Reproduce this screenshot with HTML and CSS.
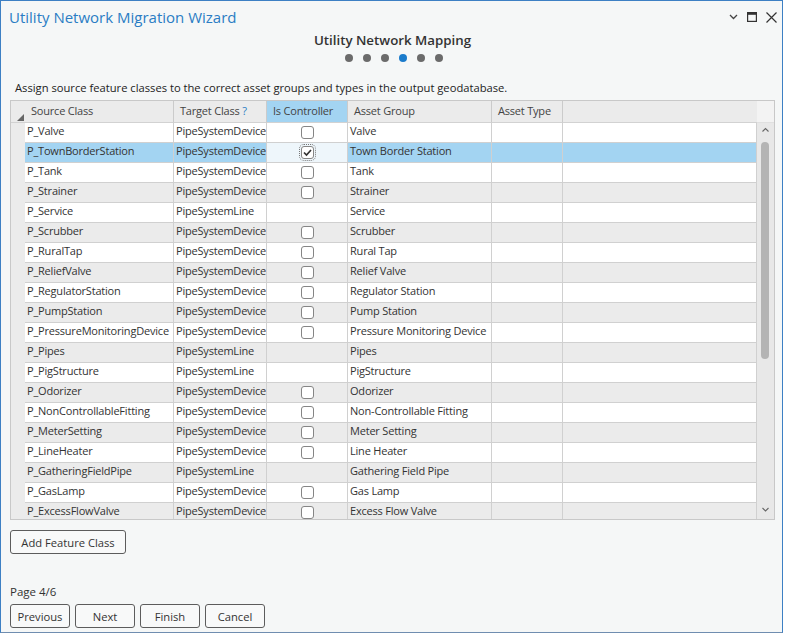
FILE: index.html
```html
<!DOCTYPE html>
<html lang="en">
<head>
    <meta charset="UTF-8">
    <title>Utility Network Migration Wizard</title>
    <link rel="stylesheet" href="styles.css">
</head>
<body>
    <div class="window">
        <div class="titlebar">
            <span class="title">Utility Network Migration Wizard</span>
            <div class="win-controls">
                <svg width="9" height="6" viewBox="0 0 9 6"><polyline points="1,1 4.5,4.5 8,1" fill="none" stroke="#444" stroke-width="1.3"/></svg>
                <svg width="10" height="10" viewBox="0 0 10 10"><rect x="0.6" y="0.6" width="8.8" height="8.8" fill="none" stroke="#333" stroke-width="1.2"/><rect x="0.6" y="0.6" width="8.8" height="2.2" fill="#333"/></svg>
                <svg width="11" height="11" viewBox="0 0 11 11"><path d="M0.5 0.5 L10.5 10.5 M10.5 0.5 L0.5 10.5" stroke="#333" stroke-width="1.2"/></svg>
            </div>
        </div>

        <div class="main">
            <div class="step-head">
                <div class="step-title">Utility Network Mapping</div>
                <div class="dots">
                    <span class="dot"></span>
                    <span class="dot"></span>
                    <span class="dot"></span>
                    <span class="dot active"></span>
                    <span class="dot"></span>
                    <span class="dot"></span>
                </div>
            </div>

            <p class="desc">Assign source feature classes to the correct asset groups and types in the output geodatabase.</p>

            <div class="grid">
                <div class="grid-head">
                    <div class="corner">
                        <svg width="8" height="7" viewBox="0 0 8 7"><polygon points="0,7 7,7 7,0" fill="#666"/></svg>
                    </div>
                    <div class="hcell c-src">Source Class</div>
                    <div class="hcell c-tgt">Target Class <span class="help">?</span></div>
                    <div class="hcell c-ctl sorted">Is Controller</div>
                    <div class="hcell c-grp">Asset Group</div>
                    <div class="hcell c-typ">Asset Type</div>
                    <div class="hcell c-fill"></div>
                    <div class="scroll-corner"></div>
                </div>
                <div class="grid-body">
                    <div class="rows">
                        <div class="row">
                            <div class="rh"></div>
                            <div class="cell c-src">P_Valve</div>
                            <div class="cell c-tgt">PipeSystemDevice</div>
                            <div class="cell c-ctl"><span class="check"></span></div>
                            <div class="cell c-grp">Valve</div>
                            <div class="cell c-typ"></div>
                            <div class="cell c-fill"></div>
                        </div>
                        <div class="row selected">
                            <div class="rh"></div>
                            <div class="cell c-src">P_TownBorderStation</div>
                            <div class="cell c-tgt">PipeSystemDevice</div>
                            <div class="cell c-ctl"><span class="check checked focus"><svg width="11" height="11" viewBox="0 0 11 11"><polyline points="2,5.5 4.5,8 9,3" fill="none" stroke="#333" stroke-width="1.7"/></svg></span></div>
                            <div class="cell c-grp">Town Border Station</div>
                            <div class="cell c-typ"></div>
                            <div class="cell c-fill"></div>
                        </div>
                        <div class="row">
                            <div class="rh"></div>
                            <div class="cell c-src">P_Tank</div>
                            <div class="cell c-tgt">PipeSystemDevice</div>
                            <div class="cell c-ctl"><span class="check"></span></div>
                            <div class="cell c-grp">Tank</div>
                            <div class="cell c-typ"></div>
                            <div class="cell c-fill"></div>
                        </div>
                        <div class="row">
                            <div class="rh"></div>
                            <div class="cell c-src">P_Strainer</div>
                            <div class="cell c-tgt">PipeSystemDevice</div>
                            <div class="cell c-ctl"><span class="check"></span></div>
                            <div class="cell c-grp">Strainer</div>
                            <div class="cell c-typ"></div>
                            <div class="cell c-fill"></div>
                        </div>
                        <div class="row">
                            <div class="rh"></div>
                            <div class="cell c-src">P_Service</div>
                            <div class="cell c-tgt">PipeSystemLine</div>
                            <div class="cell c-ctl"></div>
                            <div class="cell c-grp">Service</div>
                            <div class="cell c-typ"></div>
                            <div class="cell c-fill"></div>
                        </div>
                        <div class="row">
                            <div class="rh"></div>
                            <div class="cell c-src">P_Scrubber</div>
                            <div class="cell c-tgt">PipeSystemDevice</div>
                            <div class="cell c-ctl"><span class="check"></span></div>
                            <div class="cell c-grp">Scrubber</div>
                            <div class="cell c-typ"></div>
                            <div class="cell c-fill"></div>
                        </div>
                        <div class="row">
                            <div class="rh"></div>
                            <div class="cell c-src">P_RuralTap</div>
                            <div class="cell c-tgt">PipeSystemDevice</div>
                            <div class="cell c-ctl"><span class="check"></span></div>
                            <div class="cell c-grp">Rural Tap</div>
                            <div class="cell c-typ"></div>
                            <div class="cell c-fill"></div>
                        </div>
                        <div class="row">
                            <div class="rh"></div>
                            <div class="cell c-src">P_ReliefValve</div>
                            <div class="cell c-tgt">PipeSystemDevice</div>
                            <div class="cell c-ctl"><span class="check"></span></div>
                            <div class="cell c-grp">Relief Valve</div>
                            <div class="cell c-typ"></div>
                            <div class="cell c-fill"></div>
                        </div>
                        <div class="row">
                            <div class="rh"></div>
                            <div class="cell c-src">P_RegulatorStation</div>
                            <div class="cell c-tgt">PipeSystemDevice</div>
                            <div class="cell c-ctl"><span class="check"></span></div>
                            <div class="cell c-grp">Regulator Station</div>
                            <div class="cell c-typ"></div>
                            <div class="cell c-fill"></div>
                        </div>
                        <div class="row">
                            <div class="rh"></div>
                            <div class="cell c-src">P_PumpStation</div>
                            <div class="cell c-tgt">PipeSystemDevice</div>
                            <div class="cell c-ctl"><span class="check"></span></div>
                            <div class="cell c-grp">Pump Station</div>
                            <div class="cell c-typ"></div>
                            <div class="cell c-fill"></div>
                        </div>
                        <div class="row">
                            <div class="rh"></div>
                            <div class="cell c-src">P_PressureMonitoringDevice</div>
                            <div class="cell c-tgt">PipeSystemDevice</div>
                            <div class="cell c-ctl"><span class="check"></span></div>
                            <div class="cell c-grp">Pressure Monitoring Device</div>
                            <div class="cell c-typ"></div>
                            <div class="cell c-fill"></div>
                        </div>
                        <div class="row">
                            <div class="rh"></div>
                            <div class="cell c-src">P_Pipes</div>
                            <div class="cell c-tgt">PipeSystemLine</div>
                            <div class="cell c-ctl"></div>
                            <div class="cell c-grp">Pipes</div>
                            <div class="cell c-typ"></div>
                            <div class="cell c-fill"></div>
                        </div>
                        <div class="row">
                            <div class="rh"></div>
                            <div class="cell c-src">P_PigStructure</div>
                            <div class="cell c-tgt">PipeSystemLine</div>
                            <div class="cell c-ctl"></div>
                            <div class="cell c-grp">PigStructure</div>
                            <div class="cell c-typ"></div>
                            <div class="cell c-fill"></div>
                        </div>
                        <div class="row">
                            <div class="rh"></div>
                            <div class="cell c-src">P_Odorizer</div>
                            <div class="cell c-tgt">PipeSystemDevice</div>
                            <div class="cell c-ctl"><span class="check"></span></div>
                            <div class="cell c-grp">Odorizer</div>
                            <div class="cell c-typ"></div>
                            <div class="cell c-fill"></div>
                        </div>
                        <div class="row">
                            <div class="rh"></div>
                            <div class="cell c-src">P_NonControllableFitting</div>
                            <div class="cell c-tgt">PipeSystemDevice</div>
                            <div class="cell c-ctl"><span class="check"></span></div>
                            <div class="cell c-grp">Non-Controllable Fitting</div>
                            <div class="cell c-typ"></div>
                            <div class="cell c-fill"></div>
                        </div>
                        <div class="row">
                            <div class="rh"></div>
                            <div class="cell c-src">P_MeterSetting</div>
                            <div class="cell c-tgt">PipeSystemDevice</div>
                            <div class="cell c-ctl"><span class="check"></span></div>
                            <div class="cell c-grp">Meter Setting</div>
                            <div class="cell c-typ"></div>
                            <div class="cell c-fill"></div>
                        </div>
                        <div class="row">
                            <div class="rh"></div>
                            <div class="cell c-src">P_LineHeater</div>
                            <div class="cell c-tgt">PipeSystemDevice</div>
                            <div class="cell c-ctl"><span class="check"></span></div>
                            <div class="cell c-grp">Line Heater</div>
                            <div class="cell c-typ"></div>
                            <div class="cell c-fill"></div>
                        </div>
                        <div class="row">
                            <div class="rh"></div>
                            <div class="cell c-src">P_GatheringFieldPipe</div>
                            <div class="cell c-tgt">PipeSystemLine</div>
                            <div class="cell c-ctl"></div>
                            <div class="cell c-grp">Gathering Field Pipe</div>
                            <div class="cell c-typ"></div>
                            <div class="cell c-fill"></div>
                        </div>
                        <div class="row">
                            <div class="rh"></div>
                            <div class="cell c-src">P_GasLamp</div>
                            <div class="cell c-tgt">PipeSystemDevice</div>
                            <div class="cell c-ctl"><span class="check"></span></div>
                            <div class="cell c-grp">Gas Lamp</div>
                            <div class="cell c-typ"></div>
                            <div class="cell c-fill"></div>
                        </div>
                        <div class="row">
                            <div class="rh"></div>
                            <div class="cell c-src">P_ExcessFlowValve</div>
                            <div class="cell c-tgt">PipeSystemDevice</div>
                            <div class="cell c-ctl"><span class="check"></span></div>
                            <div class="cell c-grp">Excess Flow Valve</div>
                            <div class="cell c-typ"></div>
                            <div class="cell c-fill"></div>
                        </div>
                    </div>
                    <div class="vscroll">
                        <svg width="17" height="19" viewBox="0 0 17 19"><polyline points="5.5,8.5 8.5,5.5 11.5,8.5" fill="none" stroke="#666" stroke-width="1.1"/></svg>
                        <div class="thumb"></div>
                        <svg class="down" width="17" height="19" viewBox="0 0 17 19"><polyline points="5.5,8 8.5,11 11.5,8" fill="none" stroke="#666" stroke-width="1.1"/></svg>
                    </div>
                </div>
            </div>

            <button class="btn add">Add Feature Class</button>

            <div class="footer">
                <div class="page">Page 4/6</div>
                <div class="nav">
                    <button class="btn">Previous</button>
                    <button class="btn">Next</button>
                    <button class="btn">Finish</button>
                    <button class="btn">Cancel</button>
                </div>
            </div>
        </div>
    </div>
</body>
</html>
```

FILE: styles.css
```css
body {
    margin: 0;
    background-color: #ffffff;
    font-family: "Open Sans", "Noto Sans", sans-serif;
    color: #333;
}

.window {
    width: 783px;
    height: 633px;
    box-sizing: border-box;
    border: 1px solid #3d80c4;
    border-bottom-color: #6f8db0;
    background-color: #f5f7f7;
    display: flex;
    flex-direction: column;
}

.titlebar {
    display: flex;
    align-items: center;
    justify-content: space-between;
    height: 32px;
    padding: 0 5px 0 8px;
    flex-shrink: 0;
}

.title {
    font-size: 15px;
    color: #2a7dc4;
}

.win-controls {
    display: flex;
    align-items: center;
    gap: 9px;
}

.main {
    flex: 1;
    display: flex;
    flex-direction: column;
    padding: 0 7px 4px 9px;
}

.step-head {
    display: flex;
    flex-direction: column;
    align-items: center;
}

.step-title {
    font-size: 13.3px;
    font-weight: 600;
    line-height: 18px;
    color: #333;
    margin-top: -2px;
}

.dots {
    display: flex;
    gap: 10px;
    margin-top: 5px;
    margin-left: 3px;
}

.dot {
    width: 8px;
    height: 8px;
    border-radius: 50%;
    background-color: #6b6b6b;
}

.dot.active {
    background-color: #1a7bcb;
}

.desc {
    margin: 18px 0 4px 5px;
    font-size: 11.2px;
    line-height: 16px;
    color: #222;
}

.grid {
    height: 420px;
    box-sizing: border-box;
    border: 1px solid #c8c8c8;
    background-color: #ffffff;
    display: flex;
    flex-direction: column;
    overflow: hidden;
    font-size: 11px;
    letter-spacing: -0.2px;
}

.grid-head {
    display: flex;
    height: 22px;
    flex-shrink: 0;
}

.corner {
    width: 14px;
    background-color: #ebebeb;
    display: flex;
    align-items: flex-end;
    justify-content: flex-end;
    border-bottom: 1px solid #d2d2d2;
    box-sizing: border-box;
    padding-bottom: 1px;
}

.hcell {
    box-sizing: border-box;
    background-color: #ebebeb;
    border-right: 1px solid #cbcbcb;
    border-bottom: 1px solid #d2d2d2;
    padding-left: 6px;
    line-height: 20px;
    color: #444;
    white-space: nowrap;
    overflow: hidden;
}

.hcell.sorted {
    background-color: #a3d4f2;
}

.help {
    color: #2a7dc4;
}

.scroll-corner {
    width: 17px;
    background-color: #f3f3f3;
    border-bottom: 1px solid #e0e0e0;
    box-sizing: border-box;
}

.c-src { width: 149px; }
.c-tgt { width: 93px; }
.c-ctl { width: 81px; }
.c-grp { width: 144px; }
.c-typ { width: 71px; }
.c-fill { flex: 1; border-right: none; }

.grid-body {
    flex: 1;
    display: flex;
    min-height: 0;
}

.rows {
    flex: 1;
    overflow: hidden;
}

.row {
    display: flex;
    height: 20px;
}

.rh {
    width: 14px;
    background-color: #ebebeb;
}

.cell {
    box-sizing: border-box;
    background-color: #ffffff;
    border-right: 1px solid #d0d0d0;
    border-bottom: 1px solid #d0d0d0;
    padding-left: 2px;
    line-height: 16px;
    white-space: nowrap;
    overflow: hidden;
    color: #333;
}

.row:nth-child(even) .cell {
    background-color: #ebebeb;
}

.row.selected .cell {
    background-color: #a3d4f2;
}

.row.selected .cell.c-ctl {
    background-color: #eef6fb;
}

.cell.c-ctl {
    display: flex;
    justify-content: center;
    align-items: center;
    padding-left: 0;
}

.check {
    width: 13px;
    height: 13px;
    box-sizing: border-box;
    border: 1px solid #858585;
    border-radius: 3px;
    background-color: #ffffff;
    display: flex;
    align-items: center;
    justify-content: center;
}

.check.focus {
    outline: 1px dotted #777;
    outline-offset: 1px;
}

.vscroll {
    width: 17px;
    background-color: #e8e8e8;
    display: flex;
    flex-direction: column;
}

.thumb {
    width: 8px;
    height: 217px;
    margin-left: 4px;
    border-radius: 4px;
    background-color: #b4b4b4;
}

.vscroll .down {
    margin-top: auto;
}

.btn {
    font-family: "Open Sans", "Noto Sans", sans-serif;
    font-size: 11.2px;
    color: #333;
    background-color: #f8f9f9;
    border: 1px solid #5c5c5c;
    border-radius: 3px;
    height: 24px;
    width: 60px;
    padding: 0;
}

.btn.add {
    width: 116px;
    margin-top: 10px;
    align-self: flex-start;
}

.footer {
    margin-top: auto;
}

.page {
    font-size: 11.5px;
    line-height: 16px;
}

.nav {
    display: flex;
    gap: 5px;
    margin-top: 4px;
}
```
